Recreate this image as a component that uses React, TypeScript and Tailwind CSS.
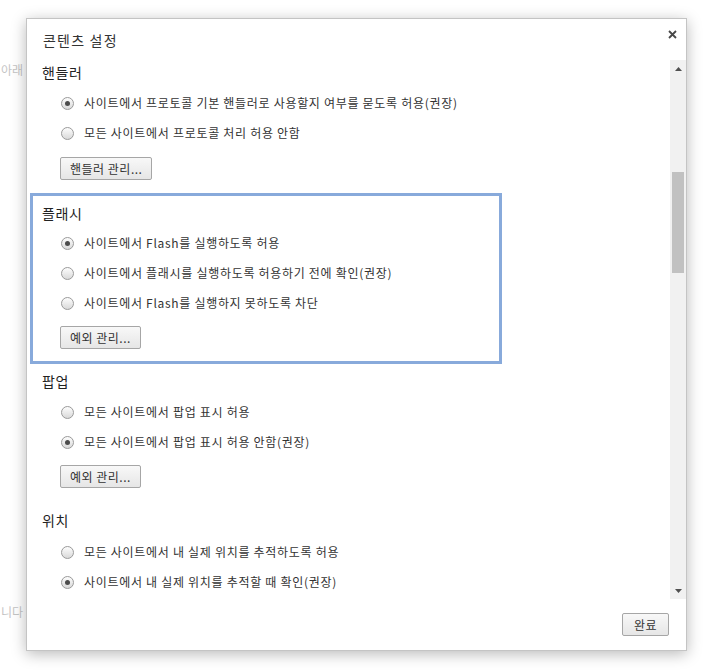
import React from 'react';

const font = { fontFamily: '"Noto Sans CJK KR", "Malgun Gothic", sans-serif' };

const Radio: React.FC<{ checked?: boolean }> = ({ checked }) => (
  <span className="w-[13px] h-[13px] shrink-0 rounded-full border border-[#9a9a9a] bg-gradient-to-b from-[#fdfdfd] to-[#d9d9d9] flex items-center justify-center">
    {checked && <span className="w-[5px] h-[5px] rounded-full bg-[#4b4b4b]" />}
  </span>
);

const Option: React.FC<{ label: string; checked?: boolean }> = ({ label, checked }) => (
  <div className="h-[30px] flex items-center pl-[19px] gap-[10px] text-[12px] leading-[16px] tracking-[0.7px] text-[#333]">
    <Radio checked={checked} />
    <span>{label}</span>
  </div>
);

const Button: React.FC<{ label: string; className?: string }> = ({ label, className }) => (
  <button
    className={
      'h-[23px] px-[9px] rounded-[2px] border border-[#a6a6a6] bg-gradient-to-b from-[#f8f8f8] to-[#e6e6e6] text-[12px] leading-[16px] tracking-[0.5px] text-[#333] ' +
      (className ?? '')
    }
  >
    {label}
  </button>
);

const Heading: React.FC<{ children: React.ReactNode; className?: string }> = ({ children, className }) => (
  <h3 className={'h-[20px] text-[14px] leading-[20px] tracking-[0.6px] text-[#222] ' + (className ?? '')}>{children}</h3>
);

const Arrow: React.FC<{ down?: boolean }> = ({ down }) => (
  <div className="h-[17px] flex items-center justify-center">
    <svg width="7" height="4" viewBox="0 0 7 4">
      <path d={down ? 'M0 0 L3.5 4 L7 0Z' : 'M0 4 L3.5 0 L7 4Z'} fill="#505050" />
    </svg>
  </div>
);

export default function App() {
  return (
    <div className="relative w-[720px] h-[671px] bg-white overflow-hidden" style={font}>
      {/* page behind the overlay */}
      <div className="text-[12px] leading-[16px] text-[#c4c4c4]">
        <div className="pt-[62px] pl-[1px]">아래</div>
        <div className="pt-[526px] pl-[1px]">니다</div>
      </div>

      {/* dialog */}
      <div className="absolute left-[26px] top-[18px] w-[661px] h-[633px] bg-white border border-[#c4c4c4] shadow-[0_3px_14px_rgba(0,0,0,0.28)] flex flex-col">
        <div className="h-[41px] flex justify-between items-start">
          <h2 className="pt-[11px] pl-[16px] text-[14px] leading-[20px] tracking-[1.2px] text-[#333]">콘텐츠 설정</h2>
          <button className="mt-[10px] mr-[9px] w-[10px] h-[10px] flex items-center justify-center">
            <svg width="9" height="9" viewBox="0 0 9 9">
              <path d="M1 1 L8 8 M8 1 L1 8" stroke="#474747" strokeWidth="1.8" />
            </svg>
          </button>
        </div>

        <div className="h-[539px] flex">
          <div className="flex-1 overflow-hidden pl-[15px] pt-[2px]">
            <section>
              <Heading className="mb-[6px]">핸들러</Heading>
              <Option checked label="사이트에서 프로토콜 기본 핸들러로 사용할지 여부를 묻도록 허용(권장)" />
              <Option label="모든 사이트에서 프로토콜 처리 허용 안함" />
              <Button label="핸들러 관리..." className="ml-[18px] mt-[9px]" />
            </section>

            <section className="mt-[13px] -ml-[12px] w-[472px] border-[3px] border-[#88aadb] pl-[9px] pt-[7px] pb-[12px]">
              <Heading className="mb-[5px]">플래시</Heading>
              <Option checked label="사이트에서 Flash를 실행하도록 허용" />
              <Option label="사이트에서 플래시를 실행하도록 허용하기 전에 확인(권장)" />
              <Option label="사이트에서 Flash를 실행하지 못하도록 차단" />
              <Button label="예외 관리..." className="ml-[18px] mt-[8px]" />
            </section>

            <section className="mt-[7px]">
              <Heading className="mb-[6px]">팝업</Heading>
              <Option label="모든 사이트에서 팝업 표시 허용" />
              <Option checked label="모든 사이트에서 팝업 표시 허용 안함(권장)" />
              <Button label="예외 관리..." className="ml-[18px] mt-[8px]" />
            </section>

            <section className="mt-[22px]">
              <Heading className="mb-[7px]">위치</Heading>
              <Option label="모든 사이트에서 내 실제 위치를 추적하도록 허용" />
              <Option checked label="사이트에서 내 실제 위치를 추적할 때 확인(권장)" />
            </section>
          </div>

          <div className="w-[16px] bg-[#f1f1f1] flex flex-col">
            <Arrow />
            <div className="mt-[95px] mx-[2px] h-[101px] bg-[#c1c1c1]" />
            <div className="flex-1" />
            <Arrow down />
          </div>
        </div>

        <div className="flex-1 flex justify-end items-start pt-[14px] pr-[17px]">
          <Button label="완료" className="px-[11px] border-[#8a8a8a]" />
        </div>
      </div>
    </div>
  );
}
